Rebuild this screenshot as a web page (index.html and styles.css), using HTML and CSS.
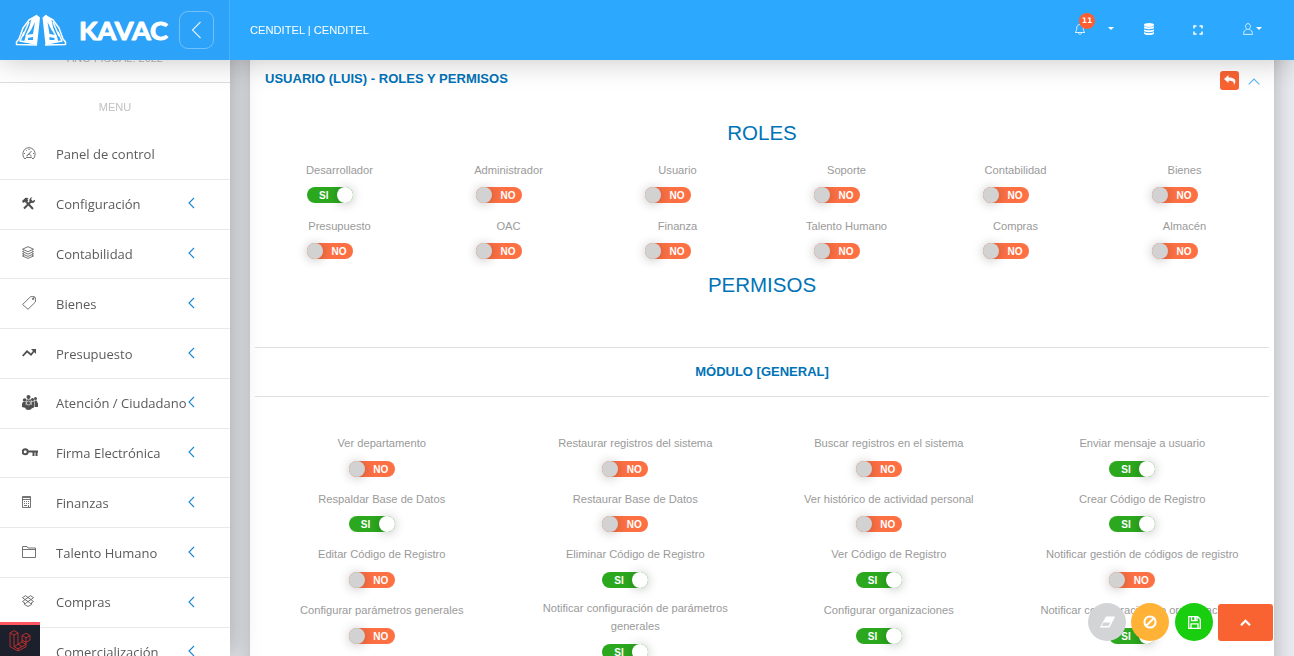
FILE: index.html
```
<!DOCTYPE html>
<html lang="es">
<head>
<meta charset="utf-8">
<title>KAVAC</title>
<link rel="stylesheet" href="styles.css">
</head>
<body>
<svg class="defs"><defs>
<symbol id="chev" viewBox="0 0 7 12"><path d="M6 1 1 6l5 5"/></symbol>
<symbol id="caret" viewBox="0 0 6 3"><path d="M0 0h6L3 3z"/></symbol>
</defs></svg>
<header class="topbar">
  <div class="brand">
    <svg class="logo" viewBox="0 0 155 32" width="155" height="32">
      <g fill="none" stroke="#fff" stroke-width="1.500" stroke-linejoin="round">
        <path d="M22 1.500 14 6 8 14 4 25 1.500 28v2.500L22 31M30 1.500 38 6l6 8 4 11 2.500 3v2.500L30 31"/>
        <path d="M14 8 8 22M18 7l-7 15M9 18l-4 9 12 2M38 8l6 14M34 7l7 15M43 18l4 9-12 2"/>
      </g>
      <path fill="#fff" fill-rule="evenodd" d="M25 3.500 21.500.7 16 6l-3 14 3-4 4-8-2 12-7 1-2 7 13 3zM13 24l5-1v3h-5zM27.500 3.500 31 .7 36.500 6l3 14-3-4-4-8 2 12 7 1 2 7-13 3zM39.500 24l-5-1v3h5z"/>
      <text class="wordmark" x="64" y="26" textLength="89" lengthAdjust="spacingAndGlyphs">KAVAC</text>
    </svg>
    <div class="collapse"><svg width="11" height="18" viewBox="0 0 11 18"><path d="M9.500 1 1.500 9l8 8"/></svg></div>
  </div>
  <div class="nav">
    <span class="org">CENDITEL | CENDITEL</span>
    <div class="tools">
      <div class="bell"><svg width="12" height="12" viewBox="0 0 12 12" class="line"><path d="M1 9.500h10c-1.500-1-1.700-2.500-1.700-4.500S8 1.500 6 1.500 2.700 3 2.700 5 2.500 8.500 1 9.500zM4.500 9.500c0 2.500 3 2.500 3 0"/></svg><span class="badge">11</span></div>
      <svg class="caret c1" width="6" height="3"><use href="#caret"/></svg>
      <svg class="db" width="10" height="12" viewBox="0 0 10 12" fill="#fff"><ellipse cx="5" cy="2" rx="5" ry="1.900"/><path d="M0 3.300c1 1.500 9 1.500 10 0v1.800c-1 1.500-9 1.500-10 0zM0 6.200c1 1.500 9 1.500 10 0V8c-1 1.500-9 1.500-10 0zM0 9.100c1 1.500 9 1.500 10 0v1.400c-1 2-9 2-10 0z"/></svg>
      <svg class="full" width="10" height="10" viewBox="0 0 10 10" fill="none" stroke="#fff" stroke-width="1.500"><path d="M1 3.500V1h2.500M6.500 1H9v2.500M9 6.500V9H6.500M3.500 9H1V6.500"/></svg>
      <svg class="user line" width="10" height="12" viewBox="0 0 10 12"><path d="M5 .6c3.400 0 3 5.800 0 5.800S1.600.6 5 .6zM3.500 6.500C1.500 7.500.6 7.800.6 11.400h8.800c0-3.600-.9-3.900-2.900-4.900"/></svg>
      <svg class="caret c2" width="6" height="3"><use href="#caret"/></svg>
    </div>
  </div>
</header>
<aside class="sidebar">
  <div class="year">AÑO FISCAL: 2022</div>
  <div class="menu-title">MENU</div>
  <nav class="menu">
    <a class="item"><span class="ico"><svg width="14" height="13" viewBox="0 0 14 13"><path d="M3 12C-.6 9 .3 1 7 .7c6.700.3 7.600 8.300 4 11.300l-1.500-1.500h-5zM5.500 8.500 9.500 4M5 9.500c0-3 4-3 4 0M2 6.500h1M11 6.500h1M4 3l.6.700M7 2v1"/></svg></span>Panel de control</a>
    <a class="item"><span class="ico"><svg width="13" height="13" viewBox="0 0 13 13"><path class="heavy" d="M2 11.500 9 4.500M4.500 5l6.500 7"/><path class="solid" d="M0 4 3.500.7l3.200.2L5.500 2l.7 1.800-2.400 2L2.500 5 1 6zM10.500 0 9 2l1.500 2L13 2.700c.4 2.500-2 4-4.200 3L7.300 4.300C7.200 1.500 8.500.3 10.500 0z"/></svg></span>Configuración<svg class="arrow"><use href="#chev"/></svg></a>
    <a class="item"><span class="ico"><svg width="12" height="13" viewBox="0 0 12 13"><path d="M6 .7 11.500 3.200 6 5.700.5 3.200zM2 4.800.5 5.600 6 8.100l5.500-2.500-1.500-.8M2 7.100.5 7.900 6 10.400l5.500-2.500-1.500-.8M2 9.300l-1.500.7L6 12.400l5.500-2.400-1.500-.7"/></svg></span>Contabilidad<svg class="arrow"><use href="#chev"/></svg></a>
    <a class="item"><span class="ico"><svg width="14" height="14" viewBox="0 0 14 14"><path d="M8.500.7h4L13.400 2v4L6 13.300.6 8.500zM10.500 2.500h1v1h-1zM12 1l-.5 2"/></svg></span>Bienes<svg class="arrow"><use href="#chev"/></svg></a>
    <a class="item"><span class="ico"><svg width="15" height="9" viewBox="0 0 15 9"><path class="trend" d="M.7 8 5 3.300l4 3.400L12 3"/><path class="solid" d="M9 1h5v5z"/></svg></span>Presupuesto<svg class="arrow"><use href="#chev"/></svg></a>
    <a class="item"><span class="ico"><svg class="solid" width="16" height="15" viewBox="0 0 16 15"><circle cx="6.500" cy="2" r="2"/><circle cx="2.600" cy="5" r="1.800"/><circle cx="10.500" cy="4.500" r="1.600"/><circle cx="13.500" cy="3.500" r="1.500"/><path d="M4.500 4.500h4.300v6H4.500zM.8 7h3v6L0 12V9zM9.500 6.500H12v6l-2.500 1zM12.500 5.500h2l1.500 3v3.500h-3.500zM3.500 10h6v4c-2 1.300-4 1.300-6 0z"/><circle cx="6.500" cy="8" r="2" stroke="#fff" stroke-width=".6"/></svg></span>Atención / Ciudadano<svg class="arrow"><use href="#chev"/></svg></a>
    <a class="item"><span class="ico"><svg width="16" height="9" viewBox="0 0 16 9"><circle cx="3.200" cy="3.700" r="2.500" class="heavy"/><path class="heavy" d="M6 3.500h10M11.500 4v4M14.500 4v4"/></svg></span>Firma Electrónica<svg class="arrow"><use href="#chev"/></svg></a>
    <a class="item"><span class="ico"><svg width="9" height="12" viewBox="0 0 9 12"><path d="M.5.500h8v11h-8zM.5 1.500h8M.5 3.500h8M2 5.500h1M4 5.500h1M6 5.500h1M2 7.500h1M4 7.500h1M6 7.500h1M2 9.500h3M6.500 9v2"/></svg></span>Finanzas<svg class="arrow"><use href="#chev"/></svg></a>
    <a class="item"><span class="ico"><svg width="14" height="12" viewBox="0 0 14 12"><path d="M.5 11.500V.500h4.500l1 1.500h7.500v9.500zM.5 3.500h13"/></svg></span>Talento Humano<svg class="arrow"><use href="#chev"/></svg></a>
    <a class="item"><span class="ico"><svg width="12" height="12" viewBox="0 0 12 12"><path d="M3.500.7 6 2.500 8.500.7l3 2L9 4.600l2.500 2-3 1.900L6 6.500 3.500 8.500l-3-1.900L3 4.600.5 2.700zM3 4.600 6 2.500l3 2.100-3 1.900zM2.500 8v1.500L6 11.500l3.500-2V8"/></svg></span>Compras<svg class="arrow"><use href="#chev"/></svg></a>
    <a class="item"><span class="ico"></span>Comercialización<svg class="arrow"><use href="#chev"/></svg></a>
  </nav>
</aside>
<main class="content">
  <section class="card">
    <div class="card-head">
      <h6>USUARIO (LUIS) - ROLES Y PERMISOS</h6>
      <span class="back"><svg width="12" height="10" viewBox="0 0 12 10"><path fill="#fff" d="M0 4 4.500 0v2.500C9.500 2.500 11.800 4 11.300 7c-.2 1.300-.8 2.200-1.500 3 .5-3-1-4.300-5.300-4.300V8z"/></svg></span>
      <svg class="up" width="12" height="7" viewBox="0 0 12 7"><path d="M.7 6.300 6 1l5.300 5.300"/></svg>
    </div>
    <h3 class="roles-title">ROLES</h3>
    <div class="grid six">
      <div class="cell"><label>Desarrollador</label><span class="sw on">SI</span></div>
      <div class="cell"><label>Administrador</label><span class="sw">NO</span></div>
      <div class="cell"><label>Usuario</label><span class="sw">NO</span></div>
      <div class="cell"><label>Soporte</label><span class="sw">NO</span></div>
      <div class="cell"><label>Contabilidad</label><span class="sw">NO</span></div>
      <div class="cell"><label>Bienes</label><span class="sw">NO</span></div>
      <div class="cell"><label>Presupuesto</label><span class="sw">NO</span></div>
      <div class="cell"><label>OAC</label><span class="sw">NO</span></div>
      <div class="cell"><label>Finanza</label><span class="sw">NO</span></div>
      <div class="cell"><label>Talento Humano</label><span class="sw">NO</span></div>
      <div class="cell"><label>Compras</label><span class="sw">NO</span></div>
      <div class="cell"><label>Almacén</label><span class="sw">NO</span></div>
    </div>
    <h3 class="perm-title">PERMISOS</h3>
    <div class="module">MÓDULO [GENERAL]</div>
    <div class="grid four">
      <div class="cell"><label>Ver departamento</label><span class="sw">NO</span></div>
      <div class="cell"><label>Restaurar registros del sistema</label><span class="sw">NO</span></div>
      <div class="cell"><label>Buscar registros en el sistema</label><span class="sw">NO</span></div>
      <div class="cell"><label>Enviar mensaje a usuario</label><span class="sw on">SI</span></div>
      <div class="cell"><label>Respaldar Base de Datos</label><span class="sw on">SI</span></div>
      <div class="cell"><label>Restaurar Base de Datos</label><span class="sw">NO</span></div>
      <div class="cell"><label>Ver histórico de actividad personal</label><span class="sw">NO</span></div>
      <div class="cell"><label>Crear Código de Registro</label><span class="sw on">SI</span></div>
      <div class="cell"><label>Editar Código de Registro</label><span class="sw">NO</span></div>
      <div class="cell"><label>Eliminar Código de Registro</label><span class="sw on">SI</span></div>
      <div class="cell"><label>Ver Código de Registro</label><span class="sw on">SI</span></div>
      <div class="cell"><label>Notificar gestión de códigos de registro</label><span class="sw">NO</span></div>
      <div class="cell"><label>Configurar parámetros generales</label><span class="sw">NO</span></div>
      <div class="cell"><label class="two">Notificar configuración de parámetros generales</label><span class="sw on">SI</span></div>
      <div class="cell"><label>Configurar organizaciones</label><span class="sw on">SI</span></div>
      <div class="cell"><label>Notificar configuración de organizaciones</label><span class="sw on">SI</span></div>
    </div>
  </section>
</main>
<div class="actions">
  <span class="round gray"><svg width="17" height="12" viewBox="0 0 17 12"><path fill="#fff" fill-rule="evenodd" d="M7 .500h9.200L10.500 11.500H.8zM4.500 6.500 2.700 10H9.500l2-3.500z"/></svg></span>
  <span class="round amber"><svg width="14" height="14" viewBox="0 0 14 14"><g fill="none" stroke="#fff" stroke-width="2"><circle cx="7" cy="7" r="5.600"/><path d="M3.200 10.800 10.800 3.200"/></g></svg></span>
  <span class="round green"><svg width="13" height="13" viewBox="0 0 13 13"><g fill="none" stroke="#fff" stroke-width="1.300"><path d="M.7.700h9l2.600 2.600v9H.7zM3 12V7.800h7V12M3.500.7v4H9v-4"/></g><path fill="#fff" d="M6.300 1h1.800v3H6.300z"/></svg></span>
  <span class="totop"><svg width="11" height="7" viewBox="0 0 11 7"><path fill="none" stroke="#fff" stroke-width="2.300" d="M1 6.200 5.500 1.800 10 6.200"/></svg></span>
</div>
<div class="debug"><svg width="22" height="22" viewBox="0 0 22 22"><path d="M1 2.800 5 .6l4 2.200v11.500l4-2.300V5.500l4-2.200 4 2.200V10l-4 2.400v4.300L9 21 1 16.600zM1 2.800l4 2.300 4-2.300M5 5.100v11.500l4 2.200 8-4.400M13 5.500l4 2.300 4-2.300M17 7.800v4.600L13 10M9 14.300l4 2.200M9 18.800V21M9 14.300l-4 2.300M13 12l4 2.400"/></svg></div>
</body>
</html>
```
FILE: styles.css
```
* { box-sizing: border-box; }
body {
  margin: 0; height: 656px; overflow: hidden; background: #ebecf1;
  font-family: "Liberation Sans", Arial, sans-serif; font-size: 11px; color: #9a9a9a;
}
.defs { position: absolute; width: 0; height: 0; }
.topbar {
  position: fixed; top: 0; left: 0; z-index: 10; display: flex; width: 1294px; height: 60px;
  background: #2ca8ff; box-shadow: 0 0 30px rgba(0, 0, 0, .24);
}
.brand {
  display: flex; align-items: center; width: 230px; padding-left: 15px;
  background: #2ca2f8; border-right: 1px solid #4bb1fb;
}
.logo { flex-shrink: 0; }
.wordmark { font: 700 25px Lato, sans-serif; fill: #fff; stroke: #fff; stroke-width: 1; stroke-linejoin: round; }
.collapse {
  display: flex; align-items: center; justify-content: center; width: 35px; height: 38px;
  margin-left: 9px; border: 1px solid #72c1fb; border-radius: 9px;
}
.collapse svg { fill: none; stroke: #d9efff; stroke-width: 1.2; }
.nav { display: flex; flex: 1; align-items: center; justify-content: space-between; padding: 0 32px 0 20px; color: #fff; }
.org { font-size: 11.150px; }
.tools { display: flex; align-items: center; }
.line { fill: none; stroke: #fff; stroke-width: .8; }
.caret { fill: #fff; margin-top: -3px; }
.bell { position: relative; height: 12px; margin: -3px 22px 0 0; }
.bell svg { display: block; }
.badge {
  position: absolute; left: 5px; top: -10px; width: 16px; height: 16px; border-radius: 50%;
  background: #ff5f30; font: bold 7.500px/16px "DejaVu Sans", sans-serif; text-align: center;
}
.db { margin: -2px 39px 0 30px; }
.full { margin-right: 40px; }
.user { margin: -3px 3px 0 0; }
.sidebar {
  position: fixed; top: 0; left: 0; z-index: 5; width: 230px; height: 656px; padding-top: 50px; overflow: visible;
  background: #fff; box-shadow: 0 2px 22px rgba(0, 0, 0, .1), 0 2px 30px rgba(0, 0, 0, .27);
}
.year { height: 33px; border-bottom: 1px solid #ddd; line-height: 16px; text-align: center; color: #b8b8b8; }
.menu-title { height: 47px; padding-top: 16px; line-height: 16px; text-align: center; color: #c1c1c1; }
.item {
  display: flex; align-items: center; height: 49.790px; padding-left: 22px; border-bottom: 1px solid #e9e9e9;
  font: 13px "Open Sans", sans-serif; color: #5b5b5b; white-space: nowrap; position: relative;
}
.ico { display: flex; width: 34px; margin-top: -2px; }
.ico svg { fill: none; stroke: #5b5b5b; stroke-width: .85; }
.ico .solid { fill: #505050; stroke: none; }
.ico .heavy { stroke: #505050; stroke-width: 2; }
.ico .trend { stroke: #505050; stroke-width: 1.8; }
.arrow {
  position: absolute; left: 188px; top: 17.500px; width: 7px; height: 12px;
  fill: none; stroke: #1787d0; stroke-width: 1.1;
}
.content { padding-left: 250px; }
.card {
  width: 1024px; height: 720px; padding: 60px 5px 0; background: #fff;
  box-shadow: 0 0 22px rgba(0, 0, 0, .27);
}
.card-head { display: flex; align-items: center; height: 40px; padding: 2px 9px 0 10px; }
h6 { flex: 1; margin: 0 0 5px; font-size: 13px; letter-spacing: .02px; color: #0073b7; }
.back {
  display: flex; align-items: center; justify-content: center; width: 19px; height: 19px;
  margin: -2px 9px 0 0; border-radius: 3px; background: #f96332;
}
.up { fill: none; stroke: #5db8f0; stroke-width: 1.1; }
h3 { margin: 0; font-size: 20.500px; font-weight: 400; line-height: 26px; text-align: center; color: #0073b7; }
.roles-title { padding: 20px 0 13px; }
.perm-title { margin-top: 1px; }
.grid { display: grid; }
.six { grid-template-columns: repeat(6, 1fr); grid-auto-rows: 56px; }
.four { grid-template-columns: repeat(4, 1fr); grid-auto-rows: 55.700px; padding-top: 35px; }
.cell { display: flex; flex-direction: column; align-items: center; padding: 0 15px; }
label { line-height: 22px; text-align: center; white-space: nowrap; font-size: 11.150px; }
.two { padding-bottom: 2px; line-height: 18px; white-space: normal; }
.sw {
  position: relative; flex-shrink: 0; width: 46px; height: 16px; margin: 6px 19px 0 0; padding-left: 24.500px;
  border-radius: 8px; background: #fc7044;
  font-size: 10px; font-weight: 700; line-height: 17px; color: #fff;
}
.four .sw { margin: 6.700px 20px 0 0; }
.sw.on { padding-left: 12px; background: #2ca81f; }
.sw::after {
  content: ""; position: absolute; left: 0; top: 0; width: 16px; height: 16px; border-radius: 50%;
  background: #d2d2d2; box-shadow: 0 1px 11px rgba(0, 0, 0, .25);
}
.sw.on::after { left: 30px; background: #fff; }
.module {
  height: 50px; margin-top: 49px; border: solid #e0e0e0; border-width: 1px 0;
  font-size: 13px; font-weight: 700; line-height: 48px; text-align: center; color: #0073b7;
}
.actions { position: fixed; left: 1088px; top: 603px; z-index: 8; display: flex; gap: 5px; }
.round, .totop { display: flex; align-items: center; justify-content: center; height: 38px; }
.round { width: 38px; border-radius: 50%; }
.gray { background: #d2d4d6; }
.amber { background: #ffb236; }
.green { margin-left: 1px; background: #18ce0f; }
.totop { width: 55px; height: 37px; margin-top: 1px; border-radius: 3px; background: #f96332; }
.debug {
  position: fixed; left: 0; top: 622px; z-index: 9; width: 40px; height: 34px; padding: 5px 0 0 9px;
  border-top: 3px solid #ff5661; background: #1b202c;
}
.debug svg { fill: none; stroke: #e0322d; stroke-width: .8; }
```
